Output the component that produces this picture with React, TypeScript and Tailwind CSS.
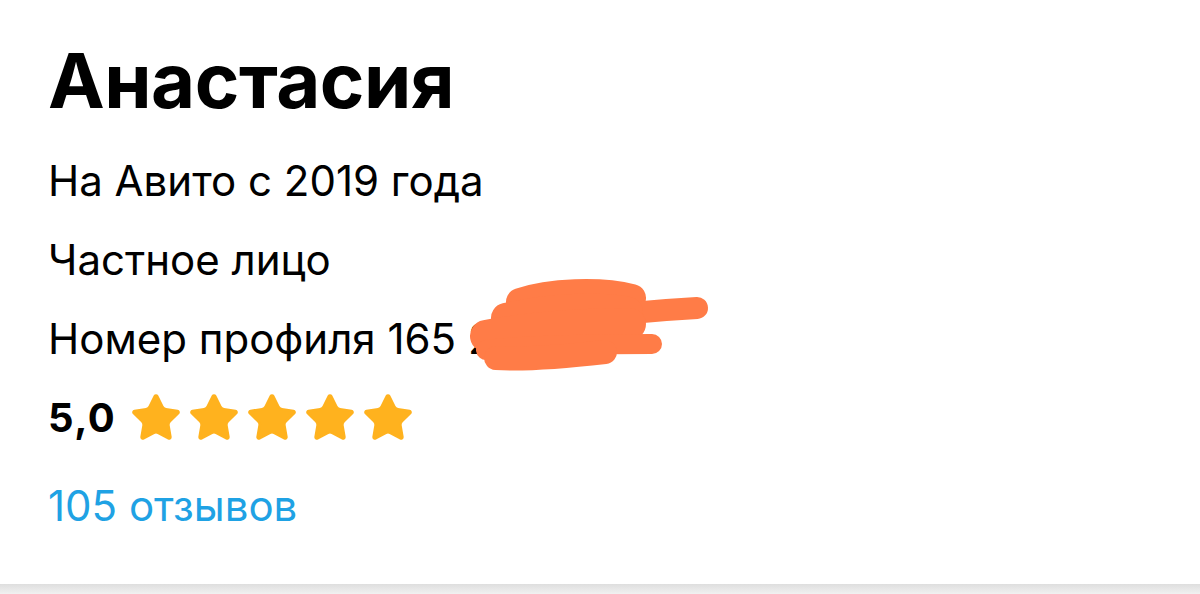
import { Star } from 'lucide-react'

function Stars() {
  return (
    <div className="flex items-center gap-[4px]">
      {[0, 1, 2, 3, 4].map((i) => (
        <Star key={i} size={54} strokeWidth={1.2} className="fill-[#ffb21e] text-[#ffb21e]" />
      ))}
    </div>
  )
}

export default function App() {
  return (
    <div className="min-h-[594px] flex flex-col bg-white font-['Inter',sans-serif] text-black">
      <div className="relative flex-1 px-12 pt-[42px]">
        {/* Name */}
        <h1 className="text-[76px] leading-none font-bold tracking-[-0.5px]">Анастасия</h1>

        {/* Info */}
        <div className="mt-[23px] flex flex-col text-[42px] leading-[79px]">
          <p>На Авито с 2019 года</p>
          <p>Частное лицо</p>
          <p>Номер профиля 165 2</p>
          <div className="flex items-center gap-[13px]">
            <span className="font-bold text-[40px] tracking-[1.5px]">5,0</span>
            <Stars />
          </div>
          <a href="#" className="mt-[9px] text-[#1fa2e4]">
            105 отзывов
          </a>
        </div>

        {/* redaction scribble over the profile number */}
        <svg
          className="absolute left-[440px] top-[272px]"
          width="280"
          height="110"
          viewBox="0 0 280 110"
          fill="none"
        >
          <g stroke="#ff7c47" strokeLinecap="round" strokeLinejoin="round">
            <path d="M80 30 C110 20 160 18 192 26" strokeWidth="28" />
            <path d="M120 50 C170 42 220 38 257 36" strokeWidth="22" />
            <path d="M66 46 C110 36 160 34 188 40" strokeWidth="30" />
            <path d="M46 64 C100 54 150 52 190 52" strokeWidth="32" />
            <path d="M46 78 C100 72 170 72 212 72" strokeWidth="20" />
            <path d="M56 86 C90 88 130 84 165 80" strokeWidth="24" />
          </g>
        </svg>
      </div>
      <div className="h-[10px] bg-gradient-to-b from-[#dedede] to-[#f1f1f1]" />
    </div>
  )
}
